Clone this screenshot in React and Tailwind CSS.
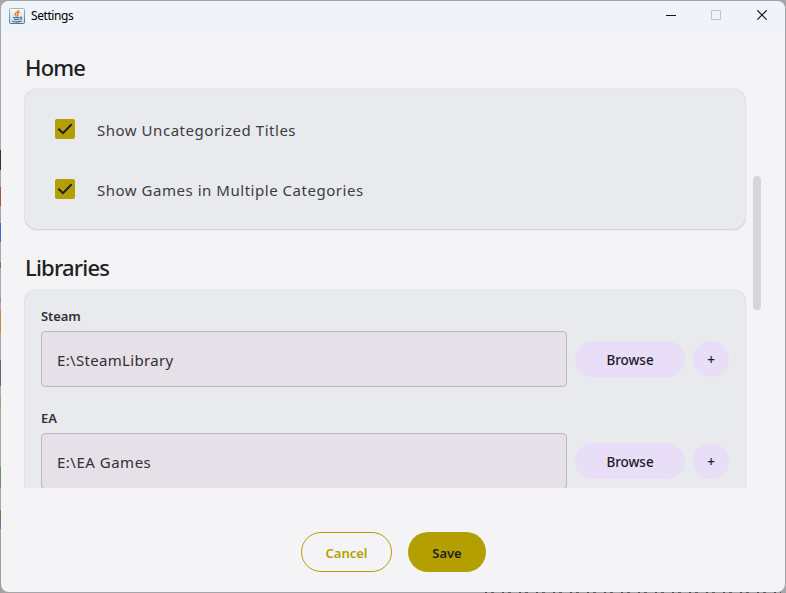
import React from 'react';

function JavaIcon() {
  return (
    <svg className="h-4 w-4 shrink-0" viewBox="0 0 16 16" fill="none">
      <defs>
        <linearGradient id="java-bg" x1="0" y1="0" x2="0" y2="1">
          <stop offset="0" stopColor="#fafbfc" />
          <stop offset="1" stopColor="#c9d8e3" />
        </linearGradient>
        <linearGradient id="java-edge" x1="0" y1="0" x2="0" y2="1">
          <stop offset="0" stopColor="#a9b7c1" />
          <stop offset="1" stopColor="#4a7896" />
        </linearGradient>
      </defs>
      <rect x="0.5" y="0.5" width="15" height="15" rx="1" fill="url(#java-bg)" stroke="url(#java-edge)" />
      <path d="M9.6 2C9.8 4 6 4.6 6.1 6.2C6.2 7.2 7.3 7.6 7.5 8.5M10.8 4.2C8.4 5.2 8 5.9 8.7 6.8C9.1 7.4 8.8 7.9 8.3 8.5" stroke="#ea7a22" strokeWidth="1.3" />
      <path d="M4 9.5H10.6M5 11.4H10M3.2 13.3C6 14 10 13.9 12.6 13M10.9 9.2C13.4 8.6 13.1 10.8 10.8 11.4" stroke="#41769a" strokeWidth="1.1" />
    </svg>
  );
}

function TitleBar() {
  return (
    <header className="flex h-[30px] shrink-0 items-center bg-[#eff3fb] pl-2">
      <JavaIcon />
      <span className="ml-[6px] text-[12px] leading-4 tracking-[-0.42px] text-black">Settings</span>
      <svg className="mr-[17px] ml-auto h-3 w-[102px]" viewBox="0 0 102 12" fill="none">
        <path d="M0 5.5H10" stroke="#111" />
        <rect x="45.5" y="0.5" width="9" height="9" rx="0.5" stroke="#c0c3c9" />
        <path d="M91.3 0.3L100.7 9.7M100.7 0.3L91.3 9.7" stroke="#111" strokeWidth="1.2" />
      </svg>
    </header>
  );
}

function CheckRow({ label, tracking }) {
  return (
    <label className="flex h-[60px] items-center">
      <span className="flex h-5 w-5 items-center justify-center rounded-[2px] bg-[#b3a000]">
        <svg className="h-5 w-5" viewBox="0 0 20 20" fill="none">
          <path d="M3.3 9.8L8 14.2L16.7 5.2" stroke="#1f1f1f" strokeWidth="2" />
        </svg>
      </span>
      <span className={`mt-[2px] ml-[22px] text-[15px] whitespace-nowrap text-[#3b3c3f] ${tracking}`}>{label}</span>
    </label>
  );
}

function LibraryRow({ name, path, tracking }) {
  return (
    <div className="flex h-[102px] flex-col">
      <div className="h-[25px] text-[13px] leading-[20px] font-semibold tracking-[-0.1px] text-[#303134]">{name}</div>
      <div className="flex h-14 items-center">
        <div className={`flex h-14 w-[526px] items-center rounded-[4px] border border-[#bcb8c0] bg-[#e6e0e8] pt-[2px] pl-[15px] text-[15px] text-[#303034] ${tracking}`}>
          {path}
        </div>
        <button className="ml-2 h-9 w-[110px] rounded-full bg-[#e8def8] pt-[3px] text-[13.5px] font-medium tracking-[-0.05px] text-[#1d192b]">Browse</button>
        <button className="ml-2 h-9 w-9 rounded-full bg-[#e8def8] pt-[3px] text-[13.5px] font-medium text-[#1d192b]">+</button>
      </div>
    </div>
  );
}

// Slivers of the windows behind this one, top to bottom as [height, colour].
const backdropEdge = [
  [150, '#a9a9ac'],
  [20, '#33322c'],
  [17, '#a9a9ac'],
  [19, '#a8573c'],
  [17, '#a5a5a8'],
  [19, '#4866c4'],
  [20, '#a9a9ac'],
  [6, '#9c6652'],
  [30, '#aaaaac'],
  [5, '#6c9cba'],
  [7, '#a9a9ac'],
  [23, '#c48a4c'],
  [27, '#a9a9ac'],
  [26, '#66666b'],
  [12, '#a9a9ac'],
  [8, '#b99263'],
  [61, '#a6a59e'],
  [21, '#6d9266'],
  [22, '#a9a9ac'],
  [9, '#8d6a50'],
  [10, '#79708c'],
  [64, '#a0a09a'],
];

const card = 'w-[720px] rounded-xl bg-[#e8eaed] shadow-[0_0_2px_rgba(0,0,0,0.2),0_1px_2px_rgba(0,0,0,0.1)]';
const heading = 'text-[22px] leading-[30px] font-medium text-[#202124]';

export default function App() {
  return (
    <div className="flex h-[593px] w-[786px] overflow-hidden bg-[#a5a5a8] font-['Noto_Sans',sans-serif]">
      <div className="flex w-px shrink-0 flex-col">
        {backdropEdge.map(([height, color], i) => (
          <div key={i} className="w-px shrink-0" style={{ height, backgroundColor: color }} />
        ))}
      </div>
      <div className="flex flex-col pt-px">
        <main className="flex h-[591px] w-[784px] flex-col overflow-hidden rounded-lg bg-[#f4f4f6]">
          <TitleBar />
          <div className="flex h-[457px] shrink-0 overflow-hidden pl-6">
            <div className="w-[720px] shrink-0 overflow-visible pt-[21px]">
              <h2 className={`${heading} tracking-[-0.8px]`}>Home</h2>
              <section className={`mt-[7px] h-[140px] pt-[10px] pl-[30px] ${card}`}>
                <CheckRow label="Show Uncategorized Titles" tracking="tracking-[0.53px]" />
                <CheckRow label="Show Games in Multiple Categories" tracking="tracking-[0.53px]" />
              </section>
              <h2 className={`mt-[23px] ${heading} tracking-[-0.8px]`}>Libraries</h2>
              <section className={`mt-[8px] h-[260px] pt-4 pl-4 ${card}`}>
                <LibraryRow name="Steam" path="E:\SteamLibrary" tracking="tracking-[0.32px]" />
                <LibraryRow name="EA" path="E:\EA Games" tracking="tracking-[0.5px]" />
              </section>
            </div>
            <div className="mt-[145px] ml-2 h-[134px] w-2 rounded-full bg-[#d6d6d8]" />
          </div>
          <footer className="mt-[44px] flex justify-center gap-4 pl-px">
            <button className="h-10 w-[91px] rounded-full border border-[#b3a000] pt-[3px] text-[13px] font-semibold text-[#b3a000]">Cancel</button>
            <button className="h-10 w-[78px] rounded-full bg-[#b3a000] pt-[3px] text-[13px] font-semibold text-[#202014]">Save</button>
          </footer>
        </main>
        <div className="ml-[484px] h-px w-[296px] bg-[repeating-linear-gradient(90deg,#4b4b4b_0_2px,#a5a5a8_2px_6px,#5c5c5c_6px_9px,#a5a5a8_9px_17px)]" />
      </div>
    </div>
  );
}
